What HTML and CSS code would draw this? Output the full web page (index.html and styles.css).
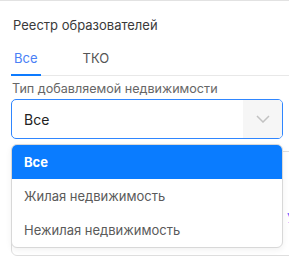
FILE: index.html
```html
<!DOCTYPE html>
<html lang="ru">
<head>
    <meta charset="UTF-8">
    <meta name="viewport" content="width=device-width, initial-scale=1.0">
    <title>Реестр образователей</title>
    <link rel="stylesheet" href="styles.css">
</head>
<body>
    <div class="page">
        <h1 class="title">Реестр образователей</h1>

        <nav class="tabs">
            <a class="tab active" href="#">Все</a>
            <a class="tab" href="#">ТКО</a>
        </nav>

        <div class="field">
            <label class="field-label">Тип добавляемой недвижимости</label>
            <div class="select">
                <span class="select-value">Все</span>
                <span class="select-arrow">
                    <svg width="14" height="8" viewBox="0 0 14 8">
                        <path d="M1 1 L7 7 L13 1" fill="none" stroke="#c2c2c2" stroke-width="1.5"/>
                    </svg>
                </span>
            </div>

            <ul class="dropdown">
                <li class="option selected">Все</li>
                <li class="option">Жилая недвижимость</li>
                <li class="option">Нежилая недвижимость</li>
            </ul>
        </div>

        <div class="card">
            <div class="card-row">
                <span></span>
                <a class="card-link" href="#">Удалить</a>
            </div>
        </div>
    </div>
</body>
</html>
```

FILE: styles.css
```css
body {
    font-family: 'Inter', 'Noto Sans', sans-serif;
    margin: 0;
    padding: 0;
    background: #fff;
    color: #333;
    overflow: hidden;
}

.page {
    border-top: 1px solid #e2e2e2;
    padding: 15px 0 0 11px;
    width: 320px;
}

.title {
    margin: 0 0 0 2px;
    font-size: 13px;
    font-weight: 400;
    line-height: 18px;
    color: #3a3a3a;
}

.tabs {
    display: flex;
    gap: 39px;
    margin-top: 15px;
    border-bottom: 1px solid #e8e8e8;
}

.tab {
    display: block;
    padding: 0 3px 7px;
    font-size: 13px;
    line-height: 18px;
    color: #555;
    text-decoration: none;
    border-bottom: 2px solid transparent;
    margin-bottom: -1px;
}

.tab.active {
    color: #4a80f6;
    border-bottom-color: #0d7bff;
}

.field {
    position: relative;
    width: 272px;
}

.field-label {
    display: block;
    margin-top: 5px;
    margin-left: 1px;
    font-size: 12.6px;
    line-height: 16px;
    color: #666;
}

.select {
    display: flex;
    align-items: stretch;
    height: 40px;
    margin-top: 2px;
    box-sizing: border-box;
    border: 1px solid #2f86ff;
    border-radius: 5px;
    overflow: hidden;
}

.select-value {
    flex: 1;
    display: flex;
    align-items: center;
    padding-left: 12px;
    font-size: 14px;
    color: #222;
}

.select-arrow {
    width: 39px;
    display: flex;
    align-items: center;
    justify-content: center;
    background: #f6f6f6;
}

.dropdown {
    position: absolute;
    top: calc(100% + 5px);
    left: 0;
    right: 0;
    margin: 0;
    padding: 0;
    list-style: none;
    background: #fff;
    border: 1px solid #d8d8d8;
    border-radius: 6px;
    overflow: hidden;
    box-shadow: 0 2px 6px rgba(0, 0, 0, 0.06);
    z-index: 2;
}

.option {
    height: 34px;
    line-height: 34px;
    padding-left: 12px;
    font-size: 13px;
    color: #5a5a5a;
}

.option.selected {
    background: #0a7cff;
    color: #fff;
    font-weight: 700;
}

.card {
    margin-top: 12px;
    height: 105px;
    box-sizing: border-box;
    border: 1px solid #dedede;
    border-radius: 6px;
}

.card-row {
    display: grid;
    grid-template-columns: 275px auto;
    padding-top: 58px;
}

.card-link {
    font-size: 13px;
    color: #6b5cff;
    text-decoration: none;
}
```
